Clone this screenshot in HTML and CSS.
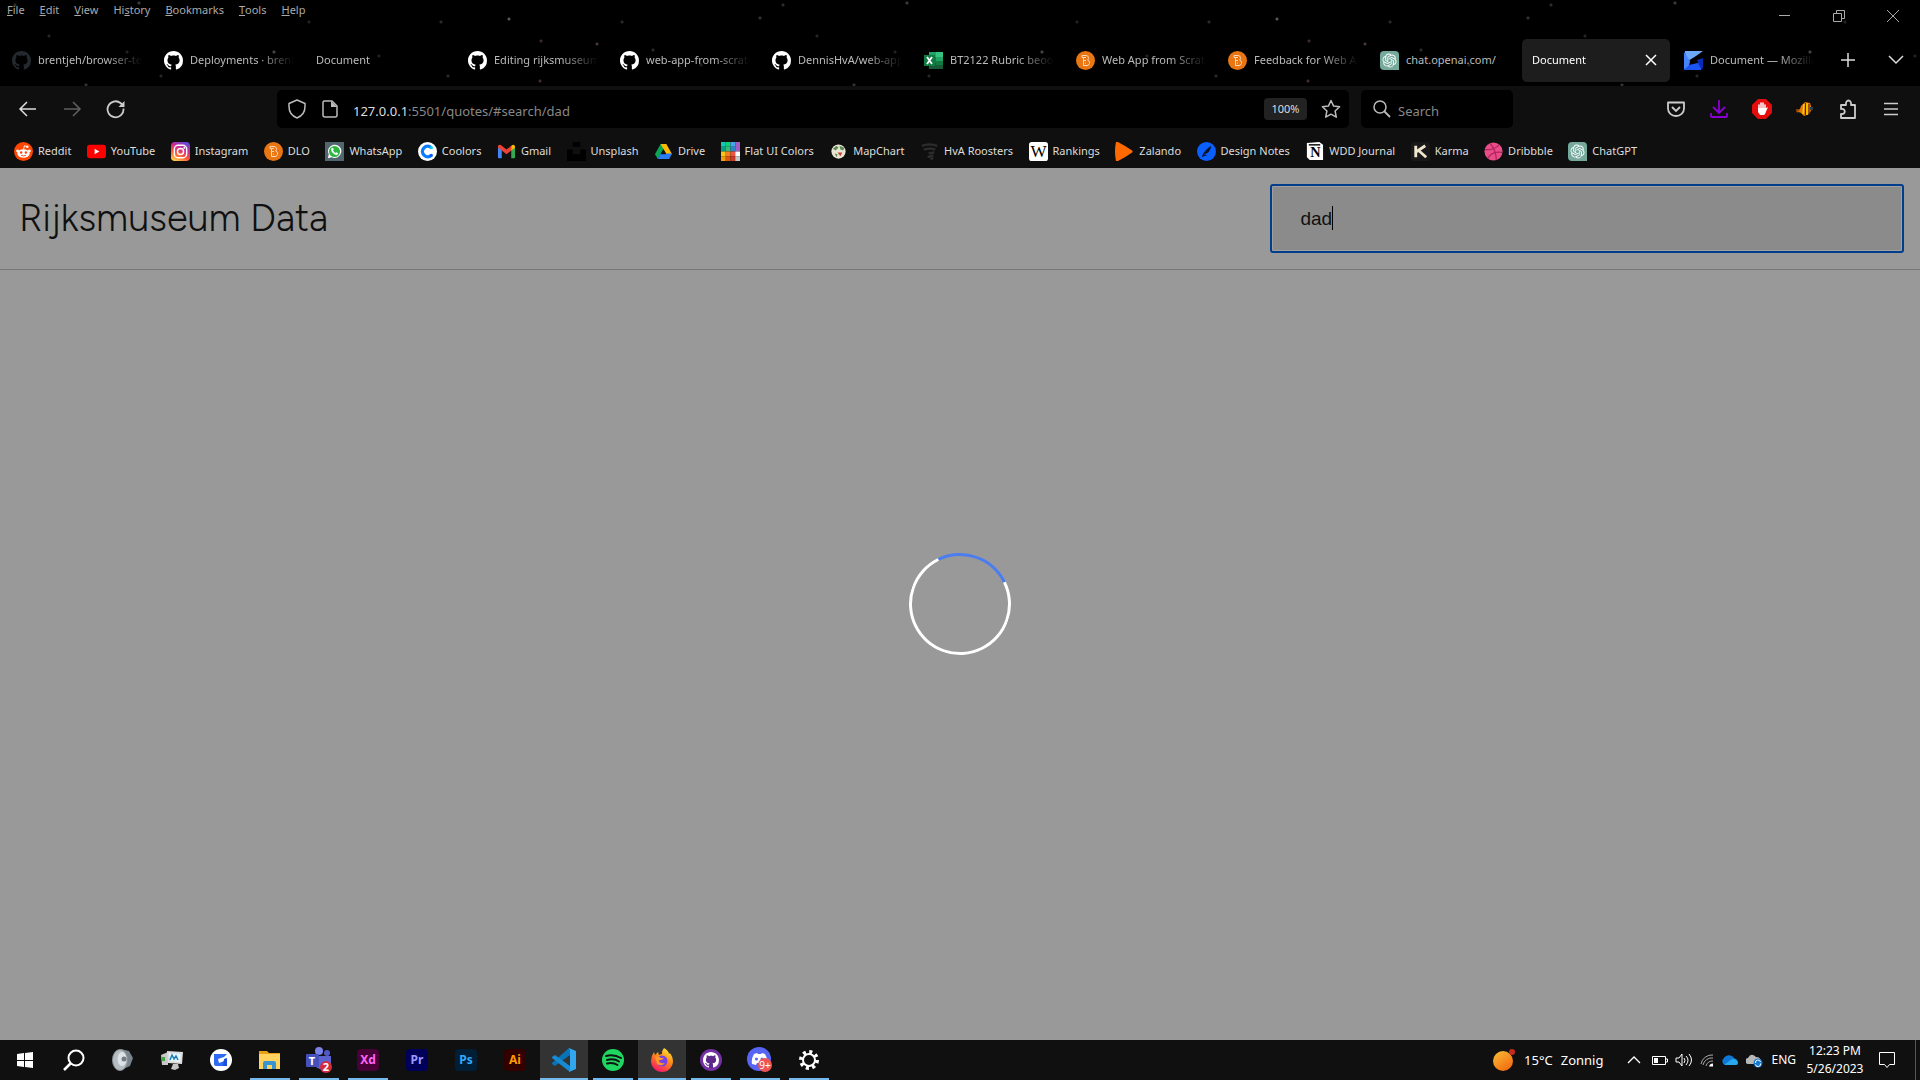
FILE: index.html
```html
<!DOCTYPE html>
<html lang="en">
<head>
<meta charset="utf-8">
<title>Document</title>
<link rel="stylesheet" href="styles.css">
</head>
<body>
<svg class="sprite" aria-hidden="true">
  <symbol id="github" viewBox="0 0 16 16"><path fill="currentColor" d="M8 0C3.58 0 0 3.58 0 8c0 3.54 2.29 6.53 5.47 7.59.4.07.55-.17.55-.38 0-.19-.01-.82-.01-1.49-2.01.37-2.53-.49-2.69-.94-.09-.23-.48-.94-.82-1.13-.28-.15-.68-.52-.01-.53.63-.01 1.08.58 1.23.82.72 1.21 1.87.87 2.33.66.07-.52.28-.87.51-1.07-1.78-.2-3.64-.89-3.64-3.95 0-.87.31-1.59.82-2.15-.08-.2-.36-1.02.08-2.12 0 0 .67-.21 2.2.82.64-.18 1.32-.27 2-.27s1.36.09 2 .27c1.53-1.04 2.2-.82 2.2-.82.44 1.1.16 1.92.08 2.12.51.56.82 1.27.82 2.15 0 3.07-1.87 3.75-3.65 3.95.29.25.54.73.54 1.48 0 1.07-.01 1.93-.01 2.2 0 .21.15.46.55.38A8.01 8.01 0 0 0 16 8c0-4.42-3.58-8-8-8z"/></symbol>
  <symbol id="openai" viewBox="0 0 38 38"><path fill="#74a99b" d="M8 0h22a8 8 0 0 1 8 8v30H8a8 8 0 0 1-8-8V8a8 8 0 0 1 8-8z"/><path fill="#fff" transform="translate(5 5) scale(1.17)" d="M22.2819 9.8211a5.9847 5.9847 0 0 0-.5157-4.9108 6.0462 6.0462 0 0 0-6.5098-2.9A6.0651 6.0651 0 0 0 4.9807 4.1818a5.9847 5.9847 0 0 0-3.9977 2.9 6.0462 6.0462 0 0 0 .7427 7.0966 5.98 5.98 0 0 0 .511 4.9107 6.051 6.051 0 0 0 6.5146 2.9001A5.9847 5.9847 0 0 0 13.2599 24a6.0557 6.0557 0 0 0 5.7718-4.2058 5.9894 5.9894 0 0 0 3.9977-2.9001 6.0557 6.0557 0 0 0-.7475-7.0729zm-9.022 12.6081a4.4755 4.4755 0 0 1-2.8764-1.0408l.1419-.0804 4.7783-2.7582a.7948.7948 0 0 0 .3927-.6813v-6.7369l2.02 1.1686a.071.071 0 0 1 .038.052v5.5826a4.504 4.504 0 0 1-4.4945 4.4944zm-9.6607-4.1254a4.4708 4.4708 0 0 1-.5346-3.0137l.142.0852 4.783 2.7582a.7712.7712 0 0 0 .7806 0l5.8428-3.3685v2.3324a.0804.0804 0 0 1-.0332.0615L9.74 19.9502a4.4992 4.4992 0 0 1-6.1408-1.6464zM2.3408 7.8956a4.485 4.485 0 0 1 2.3655-1.9728V11.6a.7664.7664 0 0 0 .3879.6765l5.8144 3.3543-2.0201 1.1685a.0757.0757 0 0 1-.071 0l-4.8303-2.7865A4.504 4.504 0 0 1 2.3408 7.872zm16.5963 3.8558L13.1038 8.364 15.1192 7.2a.0757.0757 0 0 1 .071 0l4.8303 2.7913a4.4944 4.4944 0 0 1-.6765 8.1042v-5.6772a.79.79 0 0 0-.407-.667zm2.0107-3.0231l-.142-.0852-4.7735-2.7818a.7759.7759 0 0 0-.7854 0L9.409 9.2297V6.8974a.0662.0662 0 0 1 .0284-.0615l4.8303-2.7866a4.4992 4.4992 0 0 1 6.6802 4.66zM8.3065 12.863l-2.02-1.1638a.0804.0804 0 0 1-.038-.0567V6.0742a4.4992 4.4992 0 0 1 7.3757-3.4537l-.142.0805L8.704 5.459a.7948.7948 0 0 0-.3927.6813zm1.0976-2.3654l2.602-1.4998 2.6069 1.4998v2.9994l-2.5974 1.4997-2.6067-1.4997Z"/></symbol>
  <symbol id="brightspace" viewBox="0 0 19 19"><circle cx="9.5" cy="9.5" r="9.5" fill="#e97613"/><path d="M6 4.500h4a2.500 2.500 0 0 1 1.500 4.500a2.800 2.800 0 0 1-1.500 5.500H7.500v-8H10M7.500 9.500H10M6 4.500v2h1.500M9.500 11.500v1" fill="none" stroke="#fbd9b8"/></symbol>
  <symbol id="excel" viewBox="0 0 19 19"><path fill="#21a366" d="M5 1h14v17H5z"/><path fill="#33c481" d="M12 1h7v5h-7z"/><path fill="#107c41" d="M5 6h7v6H5z"/><path fill="#185c37" d="M5 12h14v6H5z"/><path fill="#107c41" d="M12 10h7v4h-7zM0 4h11v11H0z"/><path d="M3 6l5 7M8 6l-5 7" stroke="#fff" stroke-width="1.800"/></symbol>
  <symbol id="spark" viewBox="0 0 19 19"><path fill="#6ba6ff" d="M1 0h18l-7 5-8 5-3-8z"/><path fill="#4684ff" d="M0 1l6 9-1 5-5 4z"/><path fill="#1b56f5" d="M0 19l5-5 13-3-1 8z"/><path fill="#0a2bb5" d="M13 9l6-2v9l-1 3-3-5z"/></symbol>
</svg>

<header class="chrome">
  <div class="titlebar">
    <nav class="menubar">
      <button><u>F</u>ile</button><button><u>E</u>dit</button><button><u>V</u>iew</button><button>Hi<u>s</u>tory</button><button><u>B</u>ookmarks</button><button><u>T</u>ools</button><button><u>H</u>elp</button>
    </nav>
    <div class="window-buttons">
      <button aria-label="Minimize"><svg width="12" height="12"><path d="M0 5.500h11" stroke="#aaa"/></svg></button>
      <button aria-label="Restore"><svg width="12" height="12"><path d="M.5 3.500h8v8h-8zM3.500 3V.5h8v8H9" fill="none" stroke="#aaa"/></svg></button>
      <button aria-label="Close window"><svg width="12" height="12"><path d="M0 0l12 12M12 0L0 12" stroke="#aaa"/></svg></button>
    </div>
  </div>

  <div class="tabstrip">
    <div class="tabs">
      <button class="tab"><svg class="fav dark"><use href="#github"/></svg><span>brentjeh/browser-tech</span></button>
      <button class="tab"><svg class="fav"><use href="#github"/></svg><span>Deployments · brentjeh</span></button>
      <button class="tab"><span>Document</span></button>
      <button class="tab"><svg class="fav"><use href="#github"/></svg><span>Editing rijksmuseum-</span></button>
      <button class="tab"><svg class="fav"><use href="#github"/></svg><span>web-app-from-scratch</span></button>
      <button class="tab"><svg class="fav"><use href="#github"/></svg><span>DennisHvA/web-app-</span></button>
      <button class="tab"><svg class="fav"><use href="#excel"/></svg><span>BT2122 Rubric beoord</span></button>
      <button class="tab"><svg class="fav"><use href="#brightspace"/></svg><span>Web App from Scratch</span></button>
      <button class="tab"><svg class="fav"><use href="#brightspace"/></svg><span>Feedback for Web App</span></button>
      <button class="tab"><svg class="fav"><use href="#openai"/></svg><span class="whole">chat.openai.com/</span></button>
      <div class="tab active"><span>Document</span><button aria-label="Close tab"><svg width="22" height="22"><path d="M6 6l10 10M16 6L6 16" stroke="#fff" stroke-width="1.500"/></svg></button></div>
      <button class="tab"><svg class="fav"><use href="#spark"/></svg><span>Document — Mozilla</span></button>
    </div>
    <div class="tab-tools">
      <button aria-label="New tab"><svg width="16" height="16"><path d="M8 1v14M1 8h14" stroke="#ddd" stroke-width="1.500"/></svg></button>
      <button aria-label="List all tabs"><svg width="16" height="16"><path d="M1 4l7 7 7-7" fill="none" stroke="#ddd" stroke-width="1.500"/></svg></button>
    </div>
  </div>

  <div class="toolbar">
    <div class="nav-buttons">
      <button aria-label="Back"><svg width="20" height="20"><path d="M18 10H2M9 3L2 10l7 7" fill="none" stroke="#ddd" stroke-width="1.500"/></svg></button>
      <button aria-label="Forward" disabled><svg width="20" height="20"><path d="M2 10h16M11 3l7 7-7 7" fill="none" stroke="#606060" stroke-width="1.500"/></svg></button>
      <button aria-label="Reload"><svg width="20" height="20"><path d="M17.500 9.500a8 8 0 1 1-3-5.500l2 2" fill="none" stroke="#ccc" stroke-width="1.800"/><path d="M18.500 2v6h-6z" fill="#ccc"/></svg></button>
    </div>
    <div class="urlbar">
      <svg width="20" height="20"><path d="M10 1l8 3.500v3C18 13 15 17 10 19 5 17 2 13 2 7.500v-3z" fill="none" stroke="#bbb" stroke-width="1.500" stroke-linejoin="round"/></svg>
      <svg width="18" height="18"><path d="M3 1h8l5 5v9a2 2 0 0 1-2 2H4a2 2 0 0 1-2-2V2z" fill="none" stroke="#bbb" stroke-width="1.500"/><path d="M10 1v6h6z" fill="#bbb"/></svg>
      <p class="url">127.0.0.1<span>:5501/quotes/#search/dad</span></p>
      <button class="zoom">100%</button>
      <button aria-label="Bookmark this page"><svg width="20" height="20"><path d="M10 1.500l2.600 5.600 6 .7-4.500 4.200 1.200 6.200-5.300-3-5.300 3 1.200-6.200L1.400 7.800l6-.7z" fill="none" stroke="#bbb" stroke-width="1.500" stroke-linejoin="round"/></svg></button>
    </div>
    <label class="searchbar">
      <svg width="18" height="18"><circle cx="7" cy="7" r="6" fill="none" stroke="#bbb" stroke-width="1.500"/><path d="M11 11l6 6" stroke="#bbb" stroke-width="1.800"/></svg>
      <input type="text" placeholder="Search" aria-label="Search">
    </label>
    <div class="extensions">
      <button aria-label="Save to Pocket"><svg width="20" height="20"><path d="M2 3.500h16v6a8 7.500 0 0 1-16 0z" fill="none" stroke="#ccc" stroke-width="1.800" stroke-linejoin="round"/><path d="M6 8l4 4 4-4" fill="none" stroke="#ccc" stroke-width="1.800"/></svg></button>
      <button aria-label="Downloads"><svg width="20" height="20"><path d="M10 1v12M4 8l6 6 6-6M2 14v3q0 1 1 1h14q1 0 1-1v-3" fill="none" stroke="#8b00d7" stroke-width="1.800"/></svg></button>
      <button aria-label="Ad blocker"><svg width="20" height="20"><path d="M6 0h8l6 6v8l-6 6H6l-6-6V6z" fill="#e40d0d"/><path d="M7 10V6M9 10V4M11 10V4M13 10V6" stroke="#fff" stroke-width="1.500" stroke-linecap="round"/><path d="M6 9h8l2-1-3 7-1 1H8l-2-3z" fill="#fff"/></svg></button>
      <button aria-label="Fish extension"><svg width="20" height="20"><path d="M1 12l4-2 1-3 4-4 5 1 2 6-3 5-5 2-3-3z" fill="#e3780b"/><path d="M1 10l4 1-3 3z" fill="#b04c00"/><path d="M9 5l-1 10M12 4v12" stroke="#fbd300" stroke-width="1.500"/><path d="M10.500 4v12M14 5v10" stroke="#5d2500"/><path d="M15 8h3v3h-3z" fill="#294449"/></svg></button>
      <button aria-label="Extensions"><svg width="20" height="20"><path d="M3 19h14V6h-4c1-6-6-6-5 0H3v4c5-1 5 6 0 5z" fill="none" stroke="#ccc" stroke-width="1.800" stroke-linejoin="round"/></svg></button>
      <button aria-label="Menu"><svg width="20" height="20"><path d="M3 4.500h14M3 10h14M3 15.500h14" stroke="#ccc" stroke-width="1.500"/></svg></button>
    </div>
  </div>

  <nav class="bookmarks">
    <a href="#"><svg viewBox="0 0 20 20"><circle cx="10" cy="10" r="10" fill="#ff4500"/><ellipse cx="10" cy="12" rx="6.500" ry="4.500" fill="#fff"/><circle cx="3.800" cy="9.500" r="1.500" fill="#fff"/><circle cx="16.200" cy="9.500" r="1.500" fill="#fff"/><path d="M10 8l1-4 3 1" stroke="#fff" fill="none"/><circle cx="14" cy="5" r="1.300" fill="#fff"/><circle cx="7.500" cy="11" r="1.300" fill="#ff4500"/><circle cx="12.500" cy="11" r="1.300" fill="#ff4500"/><path d="M7.500 14q2.500 1.500 5 0" stroke="#ff4500" fill="none"/></svg>Reddit</a>
    <a href="#"><svg viewBox="0 0 20 20"><rect y="3" width="20" height="14" rx="3" fill="red"/><path d="M8 7l5 3-5 3z" fill="#fff"/></svg>YouTube</a>
    <a href="#"><svg viewBox="0 0 20 20"><defs><linearGradient id="ig" x1=".2" y1="1" x2=".7" y2="0"><stop stop-color="#ffd24d"/><stop offset=".35" stop-color="#fb5a35"/><stop offset=".65" stop-color="#d02a8e"/><stop offset="1" stop-color="#6548d8"/></linearGradient></defs><rect width="20" height="20" rx="4" fill="url(#ig)"/><rect x="3.500" y="3.500" width="13" height="13" rx="4" fill="none" stroke="#fff" stroke-width="1.500"/><circle cx="10" cy="10" r="3.200" fill="none" stroke="#fff" stroke-width="1.500"/><circle cx="14" cy="6" r="1" fill="#fff"/></svg>Instagram</a>
    <a href="#"><svg><use href="#brightspace"/></svg>DLO</a>
    <a href="#"><svg viewBox="0 0 20 20"><path fill="#52666f" d="M0 0h20v20H0z"/><path fill="#fff" d="M3 17l1-4a7 7 0 1 1 3 3z"/><circle cx="10" cy="10" r="5.800" fill="#2cb742"/><path fill="#fff" d="M7 6l1.500.2.700 2-.7 1 2.300 2.300 1-.7 2 .8c.3 4-7 1.400-7.300-3.600z"/></svg>WhatsApp</a>
    <a href="#"><svg viewBox="0 0 20 20"><circle cx="10" cy="10" r="10" fill="#fff"/><path d="M14 6a5.500 5.500 0 1 0 0 8" fill="none" stroke="#0a7cff" stroke-width="3.500"/><circle cx="14" cy="6" r="1.700" fill="#0bd0ff"/><circle cx="14" cy="14" r="1.700" fill="#0a5bff"/></svg>Coolors</a>
    <a href="#"><svg viewBox="0 0 20 20"><path d="M1 5l4 3v9H2q-1 0-1-1z" fill="#4285f4"/><path d="M19 5l-4 3v9h3q1 0 1-1z" fill="#34a853"/><path d="M1 4q2-2 4 0l5 4 5-4v5l-5 4-5-4-4-3z" fill="#ea4335"/><path d="M15 4q4-3 4 2l-4 3z" fill="#fbbc04"/></svg>Gmail</a>
    <a href="#"><svg viewBox="0 0 20 20"><path fill="#000" d="M6 0h8v5H6zM0 8h6v5h8V8h6v12H0z"/></svg>Unsplash</a>
    <a href="#"><svg viewBox="0 0 20 20"><path fill="#0aa550" d="M7 2L1 13l3 5 9-16z"/><path fill="#ffba00" d="M7 2h6l6 11h-6z"/><path fill="#2a7cf6" d="M7 12h12l-3 6H4z"/><path fill="#111" d="M10 8l3 5H7z"/></svg>Drive</a>
    <a href="#"><svg viewBox="0 0 20 20"><path fill="#16c7b0" d="M0 0h5v5H0z"/><path fill="#00a08a" d="M0 5h5v5H0z"/><path fill="#13ce78" d="M5 0h5v5H5z"/><path fill="#3cb878" d="M5 5h5v5H5z"/><path fill="#45a5e8" d="M10 0h5v5h-5z"/><path fill="#2f86c5" d="M10 5h5v5h-5z"/><path fill="#a55cc5" d="M15 0h5v10h-5z"/><path fill="#f7c513" d="M0 10h5v5H0z"/><path fill="#f39c12" d="M0 15h5v5H0z"/><path fill="#f08223" d="M5 10h5v5H5z"/><path fill="#d8590a" d="M5 15h5v5H5z"/><path fill="#f0553f" d="M10 10h5v5h-5z"/><path fill="#c93a2b" d="M10 15h5v5h-5z"/><path fill="#fff" d="M15 10h5v5h-5z"/><path fill="#c3c7c9" d="M15 15h5v5h-5z"/></svg>Flat UI Colors</a>
    <a href="#"><svg viewBox="0 0 20 20"><circle cx="10" cy="10" r="7.500" fill="#e9e5d3"/><path d="M4 7l4-3 2 2-3 3zM11 4l5 2-1 3-3-1zM6 12l3 1-1 3z" fill="#5c8a54"/><path d="M9 11l5 0-2 4z" fill="#c83d31"/></svg>MapChart</a>
    <a href="#"><svg viewBox="0 0 20 20"><path d="M2 4q8-3 16 0M4 8q7-2 12 0M9 12l6-1M8 16l6-2M11 18l3-1" fill="none" stroke="#2d2d2f" stroke-width="2.500"/></svg>HvA Roosters</a>
    <a href="#"><svg viewBox="0 0 20 20"><rect width="20" height="20" rx="3" fill="#fff"/><text x="10" y="16" text-anchor="middle" font-family="Liberation Serif, serif" font-size="18">W</text></svg>Rankings</a>
    <a href="#"><svg viewBox="0 0 20 20"><path d="M1 0q1-1 4 1 6 3 13 8 1 1 0 2-7 5-13 8-3 2-4 1-2-10 0-20z" fill="#ff6900"/></svg>Zalando</a>
    <a href="#"><svg viewBox="0 0 20 20"><circle cx="10" cy="10" r="10" fill="#0a5fff"/><path d="M5 16q2-7 10-12-1 8-8 9l4 1-4 1z" fill="#06122c"/></svg>Design Notes</a>
    <a href="#"><svg viewBox="0 0 20 20"><path d="M2 1l13-1 4 3v16H5l-3-3z" fill="#fff"/><path d="M4 3h12" stroke="#000" stroke-width="1.500"/><text x="11" y="16" text-anchor="middle" font-family="Liberation Serif, serif" font-size="15" font-weight="bold">N</text></svg>WDD Journal</a>
    <a href="#"><svg viewBox="0 0 20 20"><rect width="20" height="20" rx="3" fill="#191919"/><path d="M5 4v12M15 4l-9 6M8 9l8 7" stroke="#eee6cd" stroke-width="3"/></svg>Karma</a>
    <a href="#"><svg viewBox="0 0 20 20"><circle cx="10" cy="10" r="9.500" fill="#ea4c89"/><path d="M1 8q9 1 15-5M6 1q7 8 7 18M4 17q5-8 15-6" fill="none" stroke="#b0245c" stroke-width="1.300"/></svg>Dribbble</a>
    <a href="#"><svg><use href="#openai"/></svg>ChatGPT</a>
  </nav>
</header>

<main class="page">
  <div class="page-header">
    <h1>Rijksmuseum Data</h1>
    <div class="query"><input type="text" value="dad" aria-label="Search the collection"><i class="caret"></i></div>
  </div>
  <div class="loading"><div class="spinner" role="status" aria-label="Loading"></div></div>
</main>

<footer class="taskbar">
  <div class="apps">
    <button aria-label="Start"><svg width="16" height="16"><path d="M0 2l7-1v7H0zM8 1l8-1v8H8zM0 9h7v6l-7-1zM8 9h8v7l-8-1z" fill="#fff"/></svg></button>
    <button aria-label="Search"><svg width="24" height="24"><circle cx="14" cy="10" r="7.500" fill="none" stroke="#fff" stroke-width="2"/><path d="M8.500 15.500L2 22" stroke="#fff" stroke-width="2.500"/></svg></button>
    <button aria-label="Sound"><svg width="24" height="24"><path d="M10 1l8 2 4 7-3 8-9 4z" fill="#77848b"/><ellipse cx="9" cy="12" rx="7.500" ry="10.500" fill="#b5bdc2" stroke="#848d91"/><ellipse cx="11" cy="11" rx="4.500" ry="7" fill="#dce2e6"/><circle cx="13" cy="11" r="2.500" fill="#707b83"/></svg></button>
    <button aria-label="Monitor"><svg width="24" height="24"><path d="M1 7l7-3v13H2z" fill="#c8c8c8"/><path d="M2 9h3v4H2z" fill="#45a346"/><path d="M7 3l16 1-1 12-14-1z" fill="#ddd"/><path d="M9 5l12 1-1 8-10-1z" fill="#e9f5fa"/><path d="M10 12l2-5 2 4 2-3 2 4" fill="none" stroke="#1b7fba" stroke-width="1.500"/><path d="M13 16h5l1 4-4 2-4-1z" fill="#c5c5c5"/></svg></button>
    <button aria-label="Spark"><svg width="24" height="24"><circle cx="12" cy="12" r="11" fill="#fff"/><path d="M5 6h13l-3 3-6 2 1 4 8-3v6H7q-2 0-2-2z" fill="#2f6bf2"/><path d="M15 11l3-1v8h-4z" fill="#1a4fe0"/></svg></button>
    <button class="open" aria-label="File Explorer"><svg width="24" height="24"><path d="M1 3h8l2 2h11v5H1z" fill="#e6a116"/><path d="M1 6h21v15H1z" fill="#ffd35d"/><path d="M5 21v-6q0-2 2-2h9q2 0 2 2v6h-4v-4H9v4z" fill="#3794d1"/></svg></button>
    <button class="open" aria-label="Teams"><svg width="26" height="26"><circle cx="13" cy="4" r="4" fill="#7b83eb"/><circle cx="21" cy="6" r="3" fill="#5059c9"/><path d="M9 9h16v9q-7 9-16 1z" fill="#5b63cf"/><rect y="7" width="13" height="13" rx="1" fill="#4650bb"/><text x="6" y="18" text-anchor="middle" fill="#fff" font-size="11" font-weight="bold">T</text><circle cx="20" cy="20" r="6" fill="#d32a42"/><text x="20" y="24" text-anchor="middle" fill="#fff" font-size="11" font-weight="bold">2</text></svg></button>
    <button class="open"><b class="adobe xd">Xd</b></button>
    <button><b class="adobe pr">Pr</b></button>
    <button><b class="adobe ps">Ps</b></button>
    <button><b class="adobe ai">Ai</b></button>
    <button class="open focus" aria-label="Visual Studio Code"><svg width="24" height="24"><path d="M18 0v7L3 18l-3-2v-1L17 0z" fill="#0873b7"/><path d="M0 9l3-2 15 11v6L0 10z" fill="#168bd2"/><path d="M17 0l7 3v18l-7 3 1-2V2z" fill="#30a7ee"/></svg></button>
    <button class="open" aria-label="Spotify"><svg width="22" height="22"><circle cx="11" cy="11" r="11" fill="#1ed760"/><path d="M4 7q8-2 15 2M5 11q7-2 12 1.500M5 14.500q6-1.500 10.500 1.500" fill="none" stroke="#111" stroke-width="2" stroke-linecap="round"/></svg></button>
    <button class="open focus" aria-label="Firefox"><svg width="24" height="24"><defs><linearGradient id="fx" x1=".8" y1="0" x2=".3" y2="1"><stop stop-color="#ffec3d"/><stop offset=".45" stop-color="#ff8a16"/><stop offset="1" stop-color="#f5156c"/></linearGradient></defs><path d="M14 0q5 3 5 6l1-1q3 4 3 8a11 11 0 0 1-22 0Q1 8 4 4l1 3 3-3 1 3 3-1q0-4 2-6z" fill="url(#fx)"/><circle cx="12" cy="13" r="5.500" fill="#7543e3"/><path d="M5 9q3-2 6 1l3 0q-3 3-5 2 0 4 6 3-3 4-8 1z" fill="#ff9825"/></svg></button>
    <button class="open" aria-label="GitHub Desktop"><svg width="22" height="22"><circle cx="11" cy="11" r="11" fill="#7430a3"/><circle cx="11" cy="11" r="8" fill="#5e278a"/><svg x="3" y="3" width="16" height="16" color="#fff"><use href="#github"/></svg></svg></button>
    <button class="open" aria-label="Discord"><svg width="26" height="26"><circle cx="12" cy="12" r="12" fill="#5865f2"/><path d="M7 7l3-1 1 1h3l1-1 3 1q3 5 2 10l-4 1-1-2h-5l-1 2-4-1q-1-5 2-10z" fill="#fff"/><circle cx="9.500" cy="12" r="1.500" fill="#5865f2"/><circle cx="15" cy="12" r="1.500" fill="#5865f2"/><circle cx="18" cy="18" r="7" fill="#ed5453"/><text x="18" y="22" text-anchor="middle" fill="#fff" font-size="10">9+</text></svg></button>
    <button class="open" aria-label="Settings"><svg width="20" height="20"><circle cx="10" cy="10" r="8" fill="none" stroke="#fff" stroke-width="4" stroke-dasharray="3 3.280"/><circle cx="10" cy="10" r="6" fill="none" stroke="#fff" stroke-width="2"/></svg></button>
  </div>
  <div class="tray">
    <button class="weather"><svg width="24" height="24"><defs><linearGradient id="sun" x2=".7" y2="1"><stop stop-color="#f9bd36"/><stop offset="1" stop-color="#f36c12"/></linearGradient></defs><circle cx="11" cy="13" r="10" fill="url(#sun)"/><circle cx="20" cy="4" r="3" fill="#c42b1c"/></svg><span>15°C</span><span>Zonnig</span></button>
    <div class="status">
      <svg width="18" height="16"><path d="M1 11l6-6 6 6" fill="none" stroke="#fff" stroke-width="1.300"/></svg>
      <svg width="16" height="16"><path d="M.5 4.500h13v8H.5zM14 7h1.500v3H14" fill="none" stroke="#fff"/><path d="M2 6h4v5H2z" fill="#fff"/></svg>
      <svg width="18" height="16"><path d="M1 6h3l3-4v12l-3-4H1z" fill="none" stroke="#fff"/><path d="M9 6q2 2 0 5M11 4q4 4 0 9M14 2q5 6 0 12" fill="none" stroke="#fff"/></svg>
      <svg width="14" height="16"><path d="M1 12A11 11 0 0 1 13 3M3 13a9 9 0 0 1 10-7M6 14a7 7 0 0 1 7-5" fill="none" stroke="#aaa"/><path d="M9 14.500a4 4 0 0 1 4-3v3z" fill="#fff"/></svg>
      <svg width="18" height="16"><path d="M4 13a4 4 0 0 1-1-7 6 6 0 0 1 10 0 4 4 0 0 1 2 7z" fill="#0f78d4"/><path d="M3 13l8-6q6 0 6 4 0 2-2 2z" fill="#28a8ea"/></svg>
      <svg width="18" height="16"><path d="M3 12a3 3 0 0 1-1-6q3-6 8-1 5 0 5 5 0 2-2 2z" fill="#b8b8b8"/><circle cx="12" cy="11" r="4.500" fill="#1678cf"/><path d="M9.500 11a2.500 2.500 0 0 1 5-1M14.500 11.500a2.500 2.500 0 0 1-5 1" fill="none" stroke="#fff"/></svg>
      <span>ENG</span>
    </div>
    <div class="clock"><time>12:23 PM</time><time>5/26/2023</time></div>
    <button class="notice" aria-label="Notifications"><svg width="16" height="18"><path d="M.5 1.500h15v12h-5l-2.500 3-2.500-3h-5z" fill="none" stroke="#fff"/></svg></button>
  </div>
</footer>
</body>
</html>
```
FILE: styles.css
```css
* { box-sizing: border-box; }

body {
  margin: 0;
  min-height: 100vh;
  display: flex;
  flex-direction: column;
  background: #999;
  font: 12px/16px "Noto Sans", "Open Sans", sans-serif;
}

button {
  padding: 0;
  border: 0;
  background: none;
  color: inherit;
  font: inherit;
  display: flex;
  align-items: center;
  justify-content: center;
}

svg { flex: none; }
.sprite { display: none; }

/* Browser chrome over a tiled star field */
.chrome {
  color: #ddd;
  font-size: 11px;
  background-color: #000;
  background-image:
    radial-gradient(circle at 509px 19px, #555 0 1px, transparent 2px),
    radial-gradient(circle at 541px 41px, #3a2c2c 0 1px, transparent 2px),
    radial-gradient(circle at 597px 44px, #473434 0 1px, transparent 2px),
    radial-gradient(circle at 622px 22px, #292929 0 1px, transparent 2px),
    radial-gradient(circle at 760px 18px, #333 0 1px, transparent 2px),
    radial-gradient(circle at 15px 5px, #2c2c2c 0 1px, transparent 2px),
    radial-gradient(circle at 139px 3px, #3a3a3a 0 1px, transparent 2px),
    radial-gradient(circle at 49px 36px, #262626 0 1px, transparent 2px),
    radial-gradient(circle at 86px 85px, #333 0 1px, transparent 2px),
    radial-gradient(circle at 127px 52px, #222 0 1px, transparent 2px),
    radial-gradient(circle at 161px 76px, #262626 0 1px, transparent 2px),
    radial-gradient(circle at 274px 52px, #444 0 1px, transparent 2px),
    radial-gradient(circle at 379px 56px, #222 0 1px, transparent 2px),
    radial-gradient(circle at 448px 76px, #2a2a2a 0 1px, transparent 2px),
    radial-gradient(circle at 540px 81px, #402d2d 0 1px, transparent 2px),
    radial-gradient(circle at 653px 50px, #292929 0 1px, transparent 2px),
    radial-gradient(circle at 701px 65px, #222 0 1px, transparent 2px),
    radial-gradient(circle at 309px 22px, #222 0 1px, transparent 2px),
    radial-gradient(circle at 441px 22px, #2a2a2a 0 1px, transparent 2px);
  background-size: 768px 168px;
}

.titlebar {
  height: 34px;
  display: flex;
  justify-content: space-between;
}
.menubar {
  display: flex;
  align-items: flex-start;
  gap: 15px;
  padding: 2px 7px;
  color: #aaa;
}
.window-buttons {
  display: flex;
  align-items: center;
  gap: 42px;
  padding: 0 21px 2px;
}

.tabstrip {
  height: 52px;
  display: flex;
  align-items: center;
  justify-content: space-between;
}
.tabs { flex: 0 1 1824px; min-width: 0; display: flex; }
.tab {
  flex: 1;
  min-width: 0;
  height: 43px;
  margin: 0 2px;
  padding: 0 8px 0 10px;
  gap: 7px;
  justify-content: flex-start;
  color: #bbb;
}
.tab span {
  flex: 1;
  text-align: left;
  white-space: nowrap;
  overflow: hidden;
  mask-image: linear-gradient(to right, #000 calc(100% - 36px), transparent);
}
.tab .whole { mask-image: none; }
.active {
  display: flex;
  align-items: center;
  border-radius: 5px;
  background: #1d1d1d;
  color: #fff;
}
.fav { width: 19px; height: 19px; color: #fff; }
.dark { color: #24292f; }
.tab-tools { display: flex; gap: 32px; padding-right: 16px; }

.toolbar {
  height: 45px;
  display: flex;
  align-items: center;
  background: #0f0f0f;
}
.nav-buttons { flex: 1 1 277px; display: flex; gap: 24px; padding-left: 18px; }
.urlbar {
  flex: 8 1 1072px;
  height: 38px;
  margin-right: 12px;
  padding: 0 8px 0 10px;
  display: flex;
  align-items: center;
  gap: 14px;
  border-radius: 5px;
  background: #000;
  color: #ddd;
  font-size: 13px;
}
.url { flex: 1; margin: 0; padding-top: 4px; }
.url span { color: #888; }
.zoom {
  width: 43px;
  height: 22px;
  border-radius: 4px;
  background: #222;
  font-size: 11px;
}
.searchbar {
  flex: 1 1 152px;
  height: 38px;
  padding: 0 12px;
  display: flex;
  align-items: center;
  gap: 7px;
  border-radius: 5px;
  background: #000;
}
.searchbar input {
  width: 100%;
  min-width: 0;
  padding: 4px 0 0;
  border: 0;
  background: none;
  color: #ddd;
  font: 13px/16px "Noto Sans", "Open Sans", sans-serif;
}
.searchbar input::placeholder { color: #888; }
.extensions {
  flex: 3 1 407px;
  display: flex;
  justify-content: flex-end;
  gap: 23px;
  padding-right: 19px;
}

.bookmarks {
  height: 37px;
  padding: 3px 15% 0 14px;
  display: flex;
  align-items: center;
  justify-content: space-between;
  gap: 8px;
  background: #0f0f0f;
}
.bookmarks a {
  display: flex;
  align-items: center;
  gap: 5px;
  color: #ddd;
  text-decoration: none;
  white-space: nowrap;
}
.bookmarks svg { width: 19px; height: 19px; }
.bookmarks { padding-right: 283px; }

/* Page content */
.page { flex: 1; display: flex; flex-direction: column; }
.page-header {
  display: grid;
  grid-template-columns: 1fr 33vw;
  align-items: center;
  padding: 16px 16px 16px 19px;
  border-bottom: 1px solid #777;
}
h1 {
  margin: 0;
  padding-bottom: 2px;
  color: #101010;
  font: 300 38px/46px Figtree, Inter, sans-serif;
}
.query { position: relative; font: 19px/24px "Liberation Sans", Arial, sans-serif; }
.query input {
  display: block;
  width: 100%;
  height: 69px;
  padding: 0 28px;
  border: 2px solid #003e8c;
  border-radius: 3px;
  background: #8b8b8b;
  box-shadow: inset 0 0 0 1px #a0a0a0;
  color: #101010;
  font: inherit;
}
.caret {
  position: absolute;
  left: 62px;
  top: 22px;
  width: 1px;
  height: 24px;
  background: #000;
}
.loading {
  flex: 1;
  display: flex;
  justify-content: center;
  align-items: flex-start;
  padding-top: 283px;
}
.spinner {
  width: 102px;
  height: 102px;
  border: 3px solid #fff;
  border-top-color: #4b7df0;
  border-radius: 50%;
  transform: rotate(19deg);
}

/* Taskbar */
.taskbar {
  height: 40px;
  display: flex;
  justify-content: space-between;
  background: #101010;
  color: #fff;
}
.apps { display: flex; gap: 1px; padding-left: 1px; }
.apps button { width: 48px; height: 40px; }
.open {
  background: linear-gradient(#76b9ed, #76b9ed) center bottom / 40px 2px no-repeat;
}
.focus {
  background-color: #333;
  background-size: 48px 2px;
}
.adobe {
  width: 22px;
  height: 22px;
  border-radius: 4px;
  font-size: 12px;
  line-height: 21px;
}
.xd { background: #470137; color: #ff61f6; }
.pr { background: #00005b; color: #9999ff; }
.ps { background: #001e36; color: #31a8ff; }
.ai { background: #330000; color: #ff9a00; }

.tray { display: flex; align-items: center; padding-right: 4px; }
.weather { gap: 8px; margin-right: 24px; font-size: 13px; }
.status { display: flex; align-items: center; gap: 7px; }
.clock {
  width: 78px;
  display: flex;
  flex-direction: column;
  align-items: center;
  line-height: 18px;
}
.notice {
  width: 42px;
  height: 40px;
  padding-right: 16px;
  border-right: 1px solid #555;
}
```
